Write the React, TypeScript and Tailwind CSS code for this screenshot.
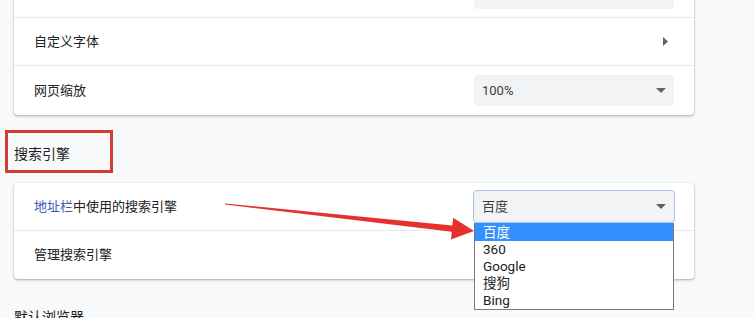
const font = { fontFamily: "Roboto, 'Noto Sans CJK SC', sans-serif" };

function Caret() {
    return (
        <svg width="10" height="5" viewBox="0 0 10 5" className="shrink-0">
            <path d="M0 0 L10 0 L5 5 Z" fill="#5f6368" />
        </svg>
    );
}

function SelectBox({ value, focused }: { value: string; focused?: boolean }) {
    return (
        <div
            className={
                focused
                    ? 'w-[202px] h-[33px] rounded-[4px] bg-[#f1f3f4] border border-[#a9c1ea] flex items-center justify-between pl-[8px] pr-[8px]'
                    : 'w-[200px] h-[31px] rounded-[4px] bg-[#f1f3f4] flex items-center justify-between pl-[8px] pr-[8px]'
            }
        >
            <span className="text-[13px] text-[#3c4043]">{value}</span>
            <Caret />
        </div>
    );
}

export default function App() {
    const engines = ['百度', '360', 'Google', '搜狗', 'Bing'];

    return (
        <div className="relative h-[318px] w-[755px] overflow-hidden bg-[#f8f9fa] text-[#202124]" style={font}>
            {/* ── Appearance card (top cut off) ── */}
            <div className="ml-[14px] w-[680px] -mt-[30px] bg-white rounded-[4px] shadow-[0_1px_2px_rgba(60,64,67,0.3),0_1px_3px_1px_rgba(60,64,67,0.1)]">
                <div className="h-[48px] flex items-center justify-end pr-[20px] border-b border-[#e8eaed]">
                    <div className="w-[200px] h-[31px] rounded-[4px] bg-[#f1f3f4]" />
                </div>
                <div className="h-[48px] flex items-center justify-between pl-[20px] pr-[26px] border-b border-[#e8eaed]">
                    <span className="text-[13px]">自定义字体</span>
                    <svg width="5" height="9" viewBox="0 0 5 9">
                        <path d="M0 0 L5 4.5 L0 9 Z" fill="#5f6368" />
                    </svg>
                </div>
                <div className="h-[49px] flex items-center justify-between pl-[20px] pr-[20px]">
                    <span className="text-[13px]">网页缩放</span>
                    <SelectBox value="100%" />
                </div>
            </div>

            {/* ── Search engine heading ── */}
            <div className="mt-[15px] ml-[5px] w-[108px] h-[43px] border-[3px] border-[#d63b36] flex items-center pl-[6px]">
                <span className="text-[14px] text-[#202124] mt-[6px]">搜索引擎</span>
            </div>

            {/* ── Search engine card ── */}
            <div className="mt-[10px] ml-[14px] w-[680px] bg-white rounded-[4px] shadow-[0_1px_2px_rgba(60,64,67,0.3),0_1px_3px_1px_rgba(60,64,67,0.1)]">
                <div className="relative h-[48px] flex items-center justify-between pl-[20px] pr-[19px] border-b border-[#e8eaed]">
                    <span className="text-[13px]">
                        <span className="text-[#3b5bb5]">地址栏</span>中使用的搜索引擎
                    </span>
                    <SelectBox value="百度" focused />

                    {/* open dropdown list */}
                    <div className="absolute left-[460px] top-[40px] z-10 w-[200px] bg-white border border-[#7a7a7a] border-t-0">
                        {engines.map((e, i) => (
                            <div
                                key={e}
                                className={
                                    i === 0
                                        ? 'h-[18px] flex items-center pl-[8px] text-[13.5px] bg-[#3390ff] text-white'
                                        : 'h-[17px] flex items-center pl-[8px] text-[13.5px] text-[#202124]'
                                }
                            >
                                {e}
                            </div>
                        ))}
                    </div>
                </div>
                <div className="h-[48px] flex items-center pl-[20px]">
                    <span className="text-[13px]">管理搜索引擎</span>
                </div>
            </div>

            {/* ── Next section heading (cut off) ── */}
            <div className="mt-[28px] ml-[14px] text-[14px]">默认浏览器</div>

            {/* ── Red annotation arrow ── */}
            <svg className="absolute left-0 top-0 pointer-events-none" width="755" height="318">
                <polygon
                    points="225,203.4 452.3,225.6 453.2,217.8 474,231 451,239.6 451.8,231.8 225,204.6"
                    fill="#e5312e"
                />
            </svg>
        </div>
    );
}
